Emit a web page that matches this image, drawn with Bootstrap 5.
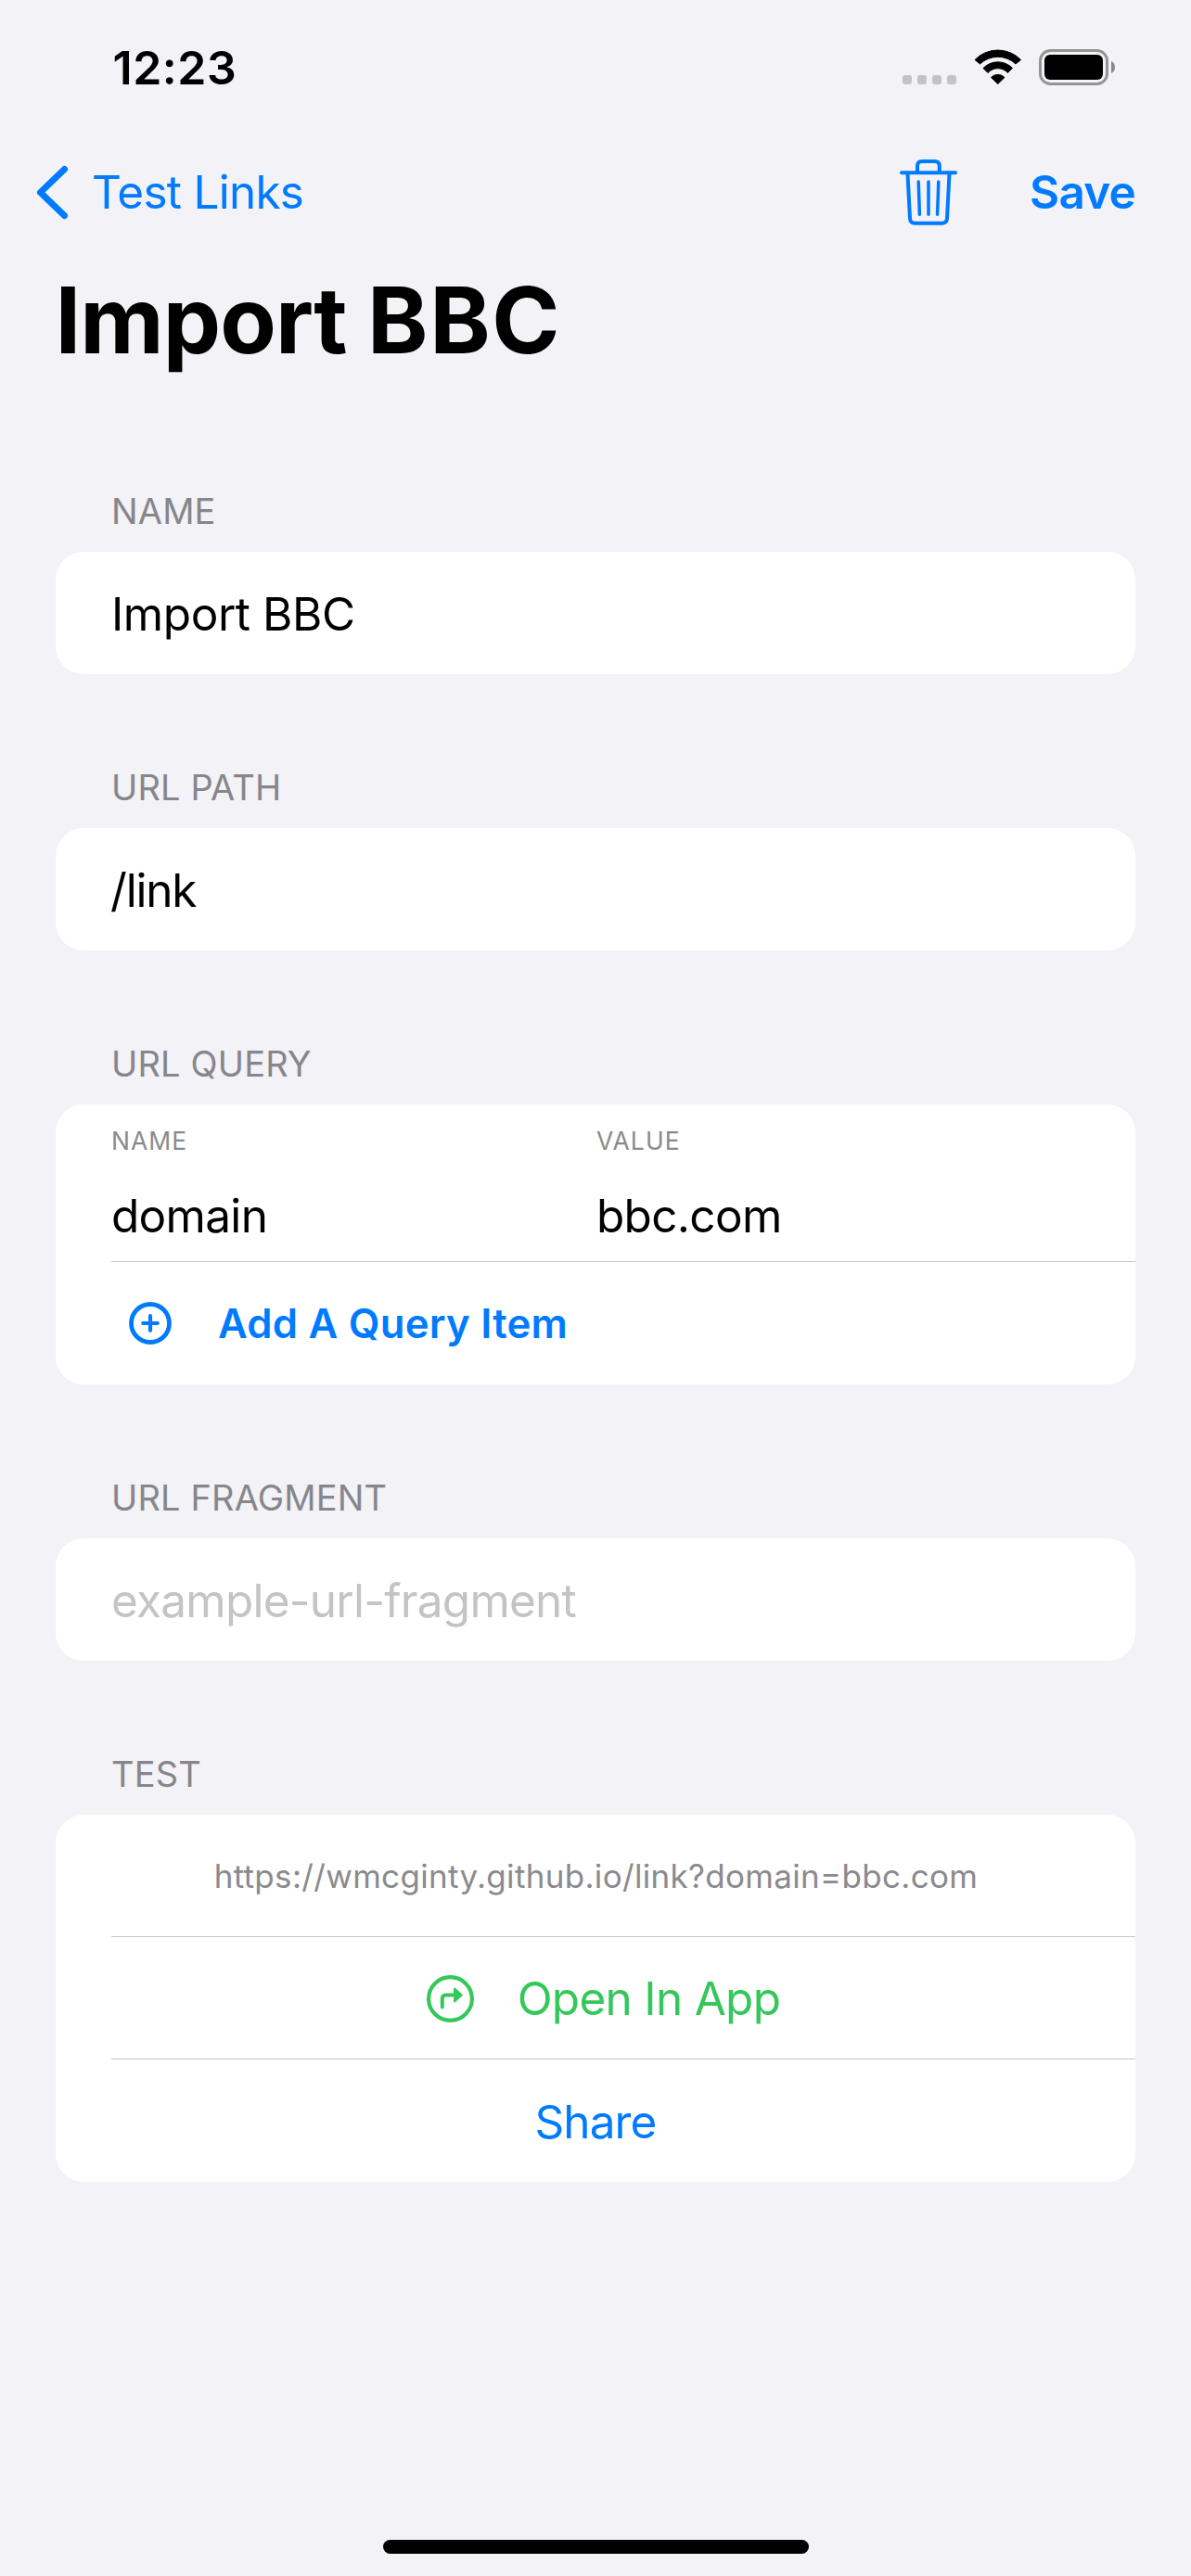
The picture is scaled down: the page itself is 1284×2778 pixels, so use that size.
<!DOCTYPE html>
<html lang="en">
<head>
<meta charset="utf-8">
<meta name="viewport" content="width=device-width, initial-scale=1">
<title>Import BBC</title>
<link href="https://cdn.jsdelivr.net/npm/bootstrap@5.3.0/dist/css/bootstrap.min.css" rel="stylesheet">
<style>
  :root { --ios-blue: #007aff; --ios-green: #34c759; --ios-gray: #86868b; --ios-bg: #f2f2f7; }
  body { background: var(--ios-bg); color: #000; font-family: Inter, "Liberation Sans", sans-serif; font-size: 49.5px; letter-spacing: -.75px; line-height: 1.2; }
  .screen { width: 1284px; height: 2778px; overflow: hidden; }
  svg { display: block; flex: none; }
  .status-bar { height: 146px; padding: 0 82px 0 121.5px; }
  .clock { font-size: 50px; font-weight: 600; letter-spacing: .5px; }
  .status-icons { height: 40px; }
  .nav-row { height: 122px; padding: 0 60px 0 38px; }
  .nav-row a, .action { color: var(--ios-blue); text-decoration: none; }
  .nav-row span, .save { padding-top: 2px; }
  .back { gap: 25px; }
  .nav-actions { gap: 77px; }
  .save { font-weight: 600; letter-spacing: -.8px; }
  .page-title { height: 154px; padding-left: 59.5px; margin: 0 0 85px; font-size: 99px; font-weight: 700; letter-spacing: 1.6px; white-space: pre; }
  .title-lead { letter-spacing: -.95px; }
  .form-section { margin: 0 60px 78px; }
  .section-label { height: 88px; padding-left: 60px; margin: 0; font-size: 38px; font-weight: 400; letter-spacing: .15px; line-height: 1; color: var(--ios-gray); }
  .group { background: #fff; border-radius: 30px; overflow: hidden; }
  .cell { height: 132px; margin-left: 60px; padding-right: 60px; }
  .cell span, .share { padding-top: 3px; }
  .cell.divided, .query-row { border-bottom: 1px solid #c8c8ca; }
  .name-text { letter-spacing: -.44px; }
  .path-text { letter-spacing: -1.2px; margin-left: -1px; }
  .hint { color: #c4c4c6; }
  .query-row { height: 170px; margin-left: 60px; padding-bottom: 8px; }
  .query-name { width: 523px; }
  .query-label { height: 79px; font-size: 26.5px; letter-spacing: 1.05px; color: #8a8a8e; }
  .query-value { height: 82px; padding-top: 1px; letter-spacing: -.7px; }
  .add-item { padding-left: 19px; gap: 50px; font-size: 43.7px; font-weight: 600; letter-spacing: .23px; }
  .cell.add-item span { padding-top: 2px; }
  .url-text { font-size: 35px; letter-spacing: .32px; color: #8a8a8e; }
  .cell span.url-text { padding: 0 0 0 1px; }
  .open-app { gap: 47px; padding-left: 17px; color: var(--ios-green); letter-spacing: -.71px; }
  .open-app svg { margin-top: 2px; }
  .share { letter-spacing: -.9px; }
  .home-bar { width: 459px; height: 15px; margin-bottom: 24px; background: #000; }
</style>
</head>
<body>
<div class="screen d-flex flex-column">
  <header>
    <div class="status-bar d-flex align-items-center justify-content-between">
      <span class="clock">12:23</span>
      <div class="status-icons d-flex">
        <!-- signal, wifi, battery -->
        <svg width="230" height="40" viewBox="972 53 230 40" aria-hidden="true">
          <g fill="#c3c2c8"><rect x="973" y="81" width="10" height="10" rx="3"/><rect x="989" y="81" width="10" height="10" rx="3"/><rect x="1005" y="81" width="10" height="10" rx="3"/><rect x="1021" y="81" width="10" height="10" rx="3"/></g>
          <g transform="translate(1050 53)" stroke="#000" stroke-width="1" stroke-linejoin="round">
            <path d="M1 11.5A34.5 34.5 0 0 1 50.500 11.500L45 16A28 28 0 0 0 6.500 16Z"/>
            <path d="M10 20.500A22 22 0 0 1 41.500 20.500L36.500 25.500A14.500 14.500 0 0 0 15 25.500Z"/>
            <path d="M18.500 30.500A10 10 0 0 1 33 30.500L25.750 37.500Z"/>
          </g>
          <rect x="1121.500" y="54.500" width="72" height="36" rx="11" fill="none" stroke="#949497" stroke-width="3"/>
          <rect x="1126" y="59" width="63" height="27" rx="6"/>
          <path d="M1198 66C1203.300 68 1203.300 77 1198 79Z" fill="#88888b"/>
        </svg>
      </div>
    </div>
    <nav class="nav-row d-flex align-items-center justify-content-between">
      <a href="#" class="back d-flex align-items-center">
        <svg width="36" height="60" viewBox="38 176 36 60" fill="none" stroke="#007aff" stroke-width="7" stroke-linecap="round" stroke-linejoin="round" aria-hidden="true"><path d="M69.500 181.500L43.500 206.500L69.500 231.500"/></svg>
        <span>Test Links</span>
      </a>
      <div class="nav-actions d-flex align-items-center">
        <a href="#" aria-label="Delete">
          <svg width="64" height="74" viewBox="969 170 64 74" fill="none" stroke="#007aff" stroke-width="4" stroke-linecap="round" stroke-linejoin="round">
            <path d="M972 186.300H1030M989 186V179Q989 174 994 174H1007.800Q1012.800 174 1012.800 179V186M978.500 187.500L981 235.500Q981.300 240.700 986.500 240.700H1015.500Q1020.700 240.700 1021 235.500L1023.500 187.500"/>
            <path stroke-width="3.500" d="M990.200 196L991.400 231.200M1001 196V231.200M1011.800 196L1010.600 231.200"/>
          </svg>
        </a>
        <a href="#" class="save">Save</a>
      </div>
    </nav>
    <h1 class="page-title d-flex align-items-center"><span class="title-lead">Import </span><span>BBC</span></h1>
  </header>

  <main class="flex-grow-1">
    <section class="form-section">
      <h2 class="section-label d-flex align-items-center">NAME</h2>
      <div class="group"><div class="cell d-flex align-items-center"><span class="name-text">Import BBC</span></div></div>
    </section>

    <section class="form-section">
      <h2 class="section-label d-flex align-items-center">URL PATH</h2>
      <div class="group"><div class="cell d-flex align-items-center"><span class="path-text">/link</span></div></div>
    </section>

    <section class="form-section">
      <h2 class="section-label d-flex align-items-center">URL QUERY</h2>
      <div class="group">
        <div class="query-row d-flex">
          <div class="query-name">
            <div class="query-label d-flex align-items-center">NAME</div>
            <div class="query-value d-flex align-items-center">domain</div>
          </div>
          <div class="flex-grow-1">
            <div class="query-label d-flex align-items-center">VALUE</div>
            <div class="query-value d-flex align-items-center">bbc.com</div>
          </div>
        </div>
        <a href="#" class="cell action add-item d-flex align-items-center">
          <svg width="46" height="46" viewBox="0 0 46 46" fill="none" stroke="#007aff" stroke-linecap="round" aria-hidden="true"><circle cx="23" cy="23" r="20.500" stroke-width="4.800"/><path stroke-width="4.200" d="M15.200 23H30.800M23 15.200V30.800"/></svg>
          <span>Add A Query Item</span>
        </a>
      </div>
    </section>

    <section class="form-section">
      <h2 class="section-label d-flex align-items-center">URL FRAGMENT</h2>
      <div class="group"><div class="cell d-flex align-items-center"><span class="hint">example-url-fragment</span></div></div>
    </section>

    <section class="form-section">
      <h2 class="section-label d-flex align-items-center">TEST</h2>
      <div class="group">
        <div class="cell divided d-flex align-items-center justify-content-center"><span class="url-text">https://wmcginty.github.io/link?domain=bbc.com</span></div>
        <a href="#" class="cell divided action open-app d-flex align-items-center justify-content-center">
          <svg width="51" height="51" viewBox="0 0 51 51" fill="none" stroke="#34c759" aria-hidden="true"><circle cx="25.500" cy="25.500" r="23.400" stroke-width="4.200"/><path stroke-width="4" stroke-linecap="round" d="M16.800 34.500V25.500Q16.800 21.500 20.800 21.500H29"/><path fill="#34c759" stroke-width="2" stroke-linejoin="round" d="M30 14.500L37.700 21.500L30 28.500Z"/></svg>
          <span>Open In App</span>
        </a>
        <a href="#" class="cell action share d-flex align-items-center justify-content-center">Share</a>
      </div>
    </section>
  </main>

  <div class="home-bar rounded-pill align-self-center"></div>
</div>
<script src="https://cdn.jsdelivr.net/npm/bootstrap@5.3.0/dist/js/bootstrap.bundle.min.js"></script>
</body>
</html>
